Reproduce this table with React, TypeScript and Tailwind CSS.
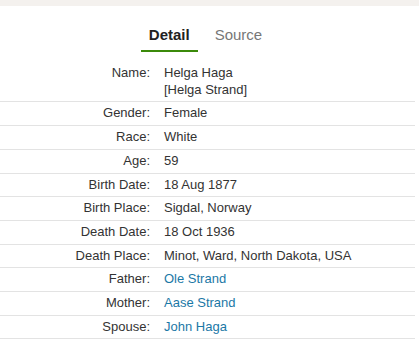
import React, { useState } from 'react';

type Row = { label: string; value: string[]; link?: boolean };

const rows: Row[] = [
  { label: 'Name:', value: ['Helga Haga', '[Helga Strand]'] },
  { label: 'Gender:', value: ['Female'] },
  { label: 'Race:', value: ['White'] },
  { label: 'Age:', value: ['59'] },
  { label: 'Birth Date:', value: ['18 Aug 1877'] },
  { label: 'Birth Place:', value: ['Sigdal, Norway'] },
  { label: 'Death Date:', value: ['18 Oct 1936'] },
  { label: 'Death Place:', value: ['Minot, Ward, North Dakota, USA'] },
  { label: 'Father:', value: ['Ole Strand'], link: true },
  { label: 'Mother:', value: ['Aase Strand'], link: true },
  { label: 'Spouse:', value: ['John Haga'], link: true },
];

const App: React.FC = () => {
  const [tab, setTab] = useState<'detail' | 'source'>('detail');

  return (
    <div className="w-[419px] h-[343px] overflow-hidden bg-white font-['Liberation_Sans',Arial,sans-serif] text-[#333]">
      <div className="h-[6px] bg-[#f4f1ee]" />

      {/* tabs */}
      <div className="w-[415px] mt-[19px] flex justify-center pr-[4px]">
        <button
          onClick={() => setTab('detail')}
          className={`px-[8px] pb-[5px] text-[15px] leading-[20px] border-b-2 ${
            tab === 'detail' ? 'font-bold text-[#222] border-[#3b8a0a]' : 'text-[#777] border-transparent'
          }`}
        >
          Detail
        </button>
        <button
          onClick={() => setTab('source')}
          className={`ml-[9px] px-[8px] pb-[5px] text-[15px] leading-[20px] border-b-2 ${
            tab === 'source' ? 'font-bold text-[#222] border-[#3b8a0a]' : 'text-[#777] border-transparent'
          }`}
        >
          Source
        </button>
      </div>

      {/* detail rows */}
      <div className="w-[415px] mt-[10px] text-[13px]">
        {rows.map((row) => (
          <div key={row.label} className="flex border-b border-[#e3e3e3] py-[3px] leading-[16.7px]">
            <div className="w-[150px] text-right text-[#333]">{row.label}</div>
            <div className={`pl-[14px] ${row.link ? 'text-[#1b78a6]' : 'text-[#333]'}`}>
              {row.value.map((v) => (
                <div key={v}>{v}</div>
              ))}
            </div>
          </div>
        ))}
      </div>
    </div>
  );
};

export default App;
